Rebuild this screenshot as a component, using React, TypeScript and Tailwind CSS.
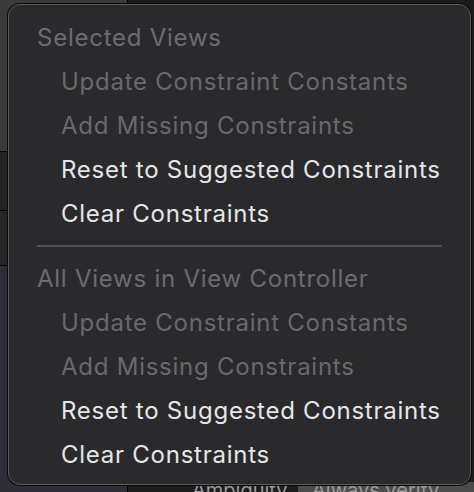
import React from "react";

type Item = { label: string; enabled: boolean };

const sections: { title: string; items: Item[] }[] = [
  {
    title: "Selected Views",
    items: [
      { label: "Update Constraint Constants", enabled: false },
      { label: "Add Missing Constraints", enabled: false },
      { label: "Reset to Suggested Constraints", enabled: true },
      { label: "Clear Constraints", enabled: true },
    ],
  },
  {
    title: "All Views in View Controller",
    items: [
      { label: "Update Constraint Constants", enabled: false },
      { label: "Add Missing Constraints", enabled: false },
      { label: "Reset to Suggested Constraints", enabled: true },
      { label: "Clear Constraints", enabled: true },
    ],
  },
];

function Backdrop() {
  return (
    <div className="flex h-full w-full">
      {/* left column of the window behind */}
      <div className="flex h-full w-[128px] flex-col border-r border-black">
        <div className="h-[151px] bg-[#3a3a3a]" />
        <div className="h-[60px] border-y border-black bg-[#232323]" />
        <div className="h-[55px] border-b border-black bg-[#262626]" />
        <div className="flex-1 bg-[#2d2e38]" />
      </div>
      <div className="flex h-full flex-1 flex-col bg-[#1c1c1c]">
        <div className="flex-1" />
        <div className="flex h-[10px] items-start text-[20px] leading-[16px] text-[#9a9a9a]">
          <span className="pl-[64px]">Ambiguity</span>
          <span className="ml-auto w-[176px] bg-[#4b4b4b] pl-[14px]">Always verify</span>
        </div>
      </div>
    </div>
  );
}

export default function App() {
  return (
    <div
      className="relative h-[492px] w-[474px] overflow-hidden"
      style={{ fontFamily: "Inter, 'Noto Sans', sans-serif" }}
    >
      <Backdrop />
      <div className="absolute left-[8px] top-[4px] flex h-[481px] w-[463px] flex-col rounded-[12px] border border-[#5a5a5c] bg-[#2a2a2d] pb-[7px] pt-[11px] tracking-[0.75px] shadow-[0_0_0_1px_#0a0a0a]">
        {sections.map((s, i) => (
          <React.Fragment key={s.title}>
            {i > 0 && (
              <div className="flex h-[22px] items-start px-[28px] pt-[9px]">
                <div className="h-[2px] w-full bg-[#505052]" />
              </div>
            )}
            <div className="flex h-[44px] items-center pl-[28px] text-[24px] text-[#6c6c6f]">
              {s.title}
            </div>
            {s.items.map((it) => (
              <div
                key={it.label}
                className={`flex h-[44px] items-center pl-[52px] text-[24px] ${
                  it.enabled ? "text-[#e6e6e6]" : "text-[#69696c]"
                }`}
              >
                {it.label}
              </div>
            ))}
          </React.Fragment>
        ))}
      </div>
    </div>
  );
}
